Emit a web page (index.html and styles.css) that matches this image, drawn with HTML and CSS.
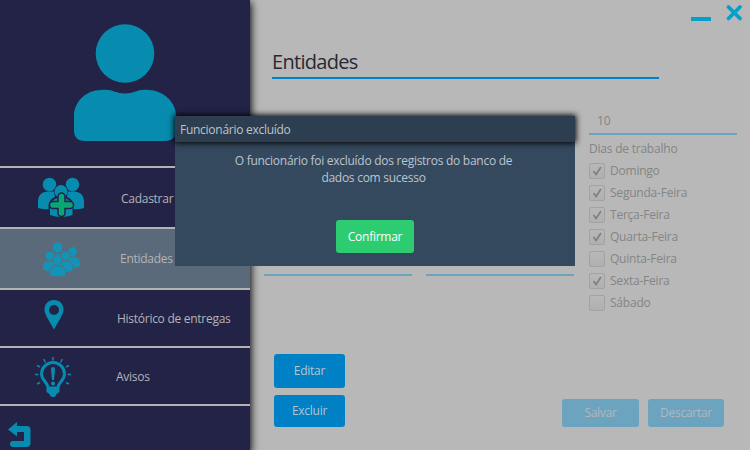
FILE: index.html
```html
<!DOCTYPE html>
<html lang="pt-BR">
<head>
<meta charset="utf-8">
<title>Entidades</title>
<link rel="stylesheet" href="styles.css">
</head>
<body>
<div class="window">
  <aside class="sidebar">
    <div class="profile">
      <svg width="104" height="118" viewBox="0 0 104 118"><circle cx="52" cy="29.5" r="29.3"/><path d="M1 92C1 78 13 66 28 66C40 64.500 42 69.500 52 69.500S64 64.500 76 66C91 67 103 78 103 92V106Q103 117 92 117H12Q1 117 1 106Z"/></svg>
    </div>
    <nav class="menu">
      <a class="item item-register"><span class="icon"><svg width="48" height="42" viewBox="0 0 48 42"><circle cx="12.500" cy="7.500" r="6.800"/><circle cx="35.500" cy="7.500" r="6.800"/><path d="M1 31V25C1 18 5 14.500 11 14.500H37C43 14.500 47 18 47 25V31Q41 33 35 32H14Q7 33 1 31Z"/><path class="cut" d="M11.500 32V29Q12 22 18 20Q15 8 24 6.500Q33 8 30 20Q36 22 36.500 29V32L35 33H13Z"/><circle cx="24" cy="14.500" r="6.500"/><path d="M13 33Q12 21 24 21T35.500 33V38Q24 42 13 38Z"/><path class="cut-line" d="M24.500 19.500V36M16 28H33"/><path class="plus" d="M24.500 19.500V36M16 28H33"/></svg></span><span class="label">Cadastrar</span></a>
      <a class="item item-entities"><span class="icon"><svg width="40" height="36" viewBox="0 0 40 36"><circle cx="15.500" cy="5.500" r="4.900"/><circle cx="30.500" cy="9.500" r="4.400"/><path d="M12 13Q15.500 10 19 13V16H12ZM27 19Q27 14.500 31 14.500Q38 15 38 22V24Q34 27 28 25Z"/><circle class="ring" cx="8" cy="14" r="4.800"/><circle class="ring" cx="23.500" cy="14" r="4.800"/><path class="ring" d="M.5 28V25Q.5 18.500 8 18.500T15 25V28Q8 31 .5 28ZM16 25Q16 18.500 23 18.500T31 25V29Q24 32 16 29Z"/><circle class="ring" cx="15.500" cy="18.500" r="5"/><path class="ring" d="M7.500 33V30Q7.500 23.500 15.500 23.500T24 30V33Q16 37 7.500 33Z"/></svg></span><span class="label">Entidades</span></a>
      <a class="item item-history"><span class="icon"><svg width="20" height="30" viewBox="0 0 20 30"><path fill-rule="evenodd" d="M10 0C4.300 0 .5 4.200.5 9.500C.5 14 4 19 10 29.500C16 19 19.500 14 19.500 9.500C19.500 4.200 15.700 0 10 0ZM10 5A5 5 0 1 1 10 15A5 5 0 1 1 10 5Z"/></svg></span><span class="label">Histórico de entregas</span></a>
      <a class="item item-alerts"><span class="icon"><svg width="38" height="42" viewBox="0 0 38 42"><path class="stroke" d="M14 31C13 26 7.500 24 7.500 18A11.500 11.500 0 0 1 30.500 18C30.500 24 25 26 24 31"/><path d="M12.500 30.500H25.500V36L22.500 38Q22 41 19 41T15.500 38L12.500 36ZM17 13Q17 11 19 11T21 13L20 24H18Z"/><circle cx="19" cy="27.500" r="2"/><path class="rays" d="M19 1V4.500M9.500 3L11.500 6.500M28.500 3L26.500 6.500M3 9.500L6 11M35 9.500L32 11M1 18.500H4.500M33.500 18.500H37M3 28L6 26.500M35 28L32 26.500"/></svg></span><span class="label">Avisos</span></a>
    </nav>
    <div class="back"><svg width="24" height="26" viewBox="0 0 24 26"><path d="M0 7.500L9 0V4H19Q22.500 4 22.500 8V21Q22.500 25 18.500 25H5Q2 25 2 22T5 19H16V10H9V14.500Z"/></svg></div>
  </aside>
  <main class="content">
    <div class="window-controls">
      <span class="minimize"></span>
      <svg width="16" height="16" viewBox="0 0 16 16"><path d="M2.500 2L14 13.500M14 2L2.500 13.500"/></svg>
    </div>
    <h1>Entidades</h1>
    <div class="form">
      <div class="blank-field"></div>
      <div class="blank-field"></div>
      <div class="schedule">
        <div class="field">10</div>
        <div class="caption">Dias de trabalho</div>
        <div class="day"><i class="box"><svg class="check" viewBox="0 0 16 16"><path d="M4 8L7 12L12.500 3.500"/></svg></i>Domingo</div>
        <div class="day"><i class="box"><svg class="check" viewBox="0 0 16 16"><path d="M4 8L7 12L12.500 3.500"/></svg></i>Segunda-Feira</div>
        <div class="day"><i class="box"><svg class="check" viewBox="0 0 16 16"><path d="M4 8L7 12L12.500 3.500"/></svg></i>Terça-Feira</div>
        <div class="day"><i class="box"><svg class="check" viewBox="0 0 16 16"><path d="M4 8L7 12L12.500 3.500"/></svg></i>Quarta-Feira</div>
        <div class="day"><i class="box"></i>Quinta-Feira</div>
        <div class="day"><i class="box"><svg class="check" viewBox="0 0 16 16"><path d="M4 8L7 12L12.500 3.500"/></svg></i>Sexta-Feira</div>
        <div class="day"><i class="box"></i>Sábado</div>
      </div>
    </div>
    <div class="actions">
      <div class="record-actions">
        <button class="btn edit">Editar</button>
        <button class="btn remove">Excluir</button>
      </div>
      <div class="save-actions">
        <button class="btn save" disabled>Salvar</button>
        <button class="btn discard" disabled>Descartar</button>
      </div>
    </div>
  </main>
  <div class="dialog" role="dialog">
    <div class="dialog-title">Funcionário excluído</div>
    <div class="dialog-body">
      <p>O funcionário foi excluído dos registros do banco de<br>dados com sucesso</p>
      <button class="btn confirm">Confirmar</button>
    </div>
  </div>
</div>
</body>
</html>
```
FILE: styles.css
```css
* { box-sizing: border-box; }
body { margin: 0; font: 12px/16px "Open Sans", "Noto Sans", sans-serif; letter-spacing: -.27px; }
svg { display: block; overflow: visible; }
.window { position: relative; display: flex; width: 750px; height: 450px; overflow: hidden; background: #b8b8b8; }

.sidebar { position: relative; z-index: 1; display: flex; flex-direction: column; width: 250px; height: 450px; background: #232347; color: #b3b3b8; box-shadow: 0 3px 8px 1px #000; }
.sidebar svg { fill: #078cb0; }
.profile { display: flex; justify-content: center; height: 166px; padding-top: 24px; }
.menu { border-top: 2px solid #b3b3b3; }
.item { display: flex; align-items: center; height: 58px; border-bottom: 2px solid #b3b3b3; white-space: nowrap; }
.icon { flex: none; }
.label { padding-top: 2px; }
.item-register { height: 61px; }
.item-register .icon { width: 121px; padding-left: 37px; }
.item-entities { height: 61px; background: #5b6a7a; }
.item-entities .icon { width: 120px; padding: 3px 0 0 42px; }
.item-entities .label { padding-top: 1px; }
.item-history .icon { width: 117px; padding: 0 0 6px 44px; }
.item-alerts .icon { width: 116px; padding: 2px 0 0 34px; }
.sidebar .item-entities svg { fill: #1194b8; }
.cut { fill: #232347; }
.cut-line { fill: none; stroke: #232347; stroke-width: 8.5; stroke-linecap: round; }
.plus { fill: none; stroke: #0aa775; stroke-width: 5.5; stroke-linecap: round; }
.ring { stroke: #5b6a7a; stroke-width: .9; }
.stroke { fill: none; stroke: #078cb0; stroke-width: 3; }
.rays { fill: none; stroke: #078cb0; stroke-width: 1.5; }
.back { padding: 16px 0 0 8px; }

.content { display: flex; flex-direction: column; width: 500px; }
.window-controls { display: flex; justify-content: flex-end; gap: 15px; height: 47px; padding: 5px 8px 0 0; }
.window-controls svg { fill: none; stroke: #05a0c8; stroke-width: 3.8; stroke-linecap: round; }
.minimize { width: 20px; height: 4px; margin-top: 12px; background: #05a0c8; }
h1 { width: 387px; height: 32px; margin: 0 0 0 22px; border-bottom: 2px solid #0080c5; color: #292931; font-size: 20px; line-height: 30px; font-weight: 400; letter-spacing: -.7px; }
.form { display: flex; gap: 14px; height: 275px; padding: 29px 0 0 14px; }
.blank-field { width: 148px; height: 168px; border-bottom: 2px solid #6ca4c0; }
.schedule { width: 148px; margin-left: 1px; color: #858585; letter-spacing: -.22px; }
.field { height: 27px; padding: 5px 0 0 8px; border-bottom: 2px solid #6ca4c0; }
.caption { height: 25px; padding-top: 6px; }
.day { display: flex; align-items: center; gap: 5px; height: 22px; }
.box { width: 16px; height: 16px; border: 1px solid #a2a2a2; border-radius: 2px; background: linear-gradient(#b8b8b8, #b0b0b0); }
.check { width: 14px; height: 14px; }
.check path { fill: none; stroke: #808080; stroke-width: 2; }
.actions { display: flex; justify-content: space-between; padding: 0 26px 0 24px; }
.record-actions { display: flex; flex-direction: column; gap: 7px; }
.save-actions { display: flex; gap: 9px; padding-top: 45px; }
.btn { padding: 0; border: 0; border-radius: 3px; background: #0080c5; color: #b7c5cf; font: inherit; letter-spacing: inherit; }
.edit { width: 71px; height: 34px; }
.remove { width: 71px; height: 32px; }
.save { width: 77px; height: 28px; }
.discard { width: 76px; height: 28px; }
.btn:disabled { background: #6ca4c0; color: #b2b8bb; }

.dialog { position: absolute; z-index: 2; left: 175px; top: 116px; width: 400px; height: 150px; background: #34495e; color: #bcc5cd; }
.dialog-title { position: relative; height: 26px; padding: 6px 5px 0; background: #2c3e50; box-shadow: 0 0 6px 1px #000; }
.dialog-body { display: flex; flex-direction: column; align-items: center; padding-top: 10px; }
.dialog p { height: 34px; margin: 0 0 34px; padding-right: 3px; text-align: center; line-height: 17px; }
.confirm { width: 78px; height: 33px; background: #2ecc71; color: #fff; }
```
